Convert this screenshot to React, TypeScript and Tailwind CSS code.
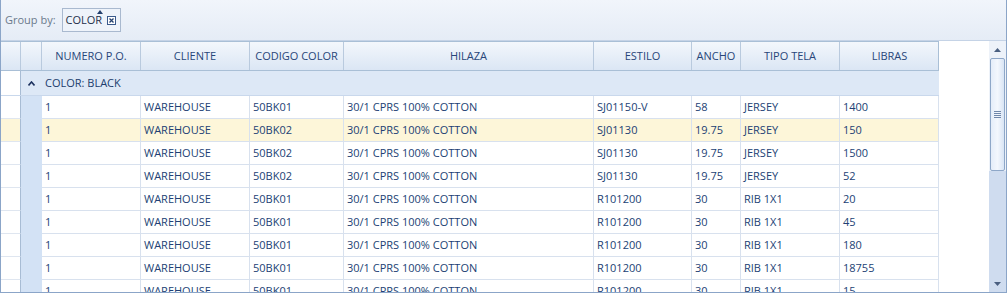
import clsx from 'clsx'

type Row = {
  po: string
  cliente: string
  codigo: string
  hilaza: string
  estilo: string
  ancho: string
  tela: string
  libras: string
}

const columns = [
  { key: 'po', label: 'NUMERO P.O.', width: 'w-[99px]' },
  { key: 'cliente', label: 'CLIENTE', width: 'w-[109px]' },
  { key: 'codigo', label: 'CODIGO COLOR', width: 'w-[94px]' },
  { key: 'hilaza', label: 'HILAZA', width: 'w-[250px]' },
  { key: 'estilo', label: 'ESTILO', width: 'w-[98px]' },
  { key: 'ancho', label: 'ANCHO', width: 'w-[49px]' },
  { key: 'tela', label: 'TIPO TELA', width: 'w-[99px]' },
  { key: 'libras', label: 'LIBRAS', width: 'w-[99px]' },
] as const

const cotton = '30/1 CPRS 100% COTTON'

const rows: Row[] = [
  { po: '1', cliente: 'WAREHOUSE', codigo: '50BK01', hilaza: cotton, estilo: 'SJ01150-V', ancho: '58', tela: 'JERSEY', libras: '1400' },
  { po: '1', cliente: 'WAREHOUSE', codigo: '50BK02', hilaza: cotton, estilo: 'SJ01130', ancho: '19.75', tela: 'JERSEY', libras: '150' },
  { po: '1', cliente: 'WAREHOUSE', codigo: '50BK02', hilaza: cotton, estilo: 'SJ01130', ancho: '19.75', tela: 'JERSEY', libras: '1500' },
  { po: '1', cliente: 'WAREHOUSE', codigo: '50BK02', hilaza: cotton, estilo: 'SJ01130', ancho: '19.75', tela: 'JERSEY', libras: '52' },
  { po: '1', cliente: 'WAREHOUSE', codigo: '50BK01', hilaza: cotton, estilo: 'R101200', ancho: '30', tela: 'RIB 1X1', libras: '20' },
  { po: '1', cliente: 'WAREHOUSE', codigo: '50BK01', hilaza: cotton, estilo: 'R101200', ancho: '30', tela: 'RIB 1X1', libras: '45' },
  { po: '1', cliente: 'WAREHOUSE', codigo: '50BK01', hilaza: cotton, estilo: 'R101200', ancho: '30', tela: 'RIB 1X1', libras: '180' },
  { po: '1', cliente: 'WAREHOUSE', codigo: '50BK01', hilaza: cotton, estilo: 'R101200', ancho: '30', tela: 'RIB 1X1', libras: '18755' },
  { po: '1', cliente: 'WAREHOUSE', codigo: '50BK01', hilaza: cotton, estilo: 'R101200', ancho: '30', tela: 'RIB 1X1', libras: '15' },
]

function GroupPanel() {
  return (
    <div className="flex h-[41px] shrink-0 items-center border-b border-[#c5d3e6] bg-gradient-to-b from-[#f1f5fb] to-[#e5ecf6] pl-[4px]">
      <span className="text-[11px] text-[#6b7a8c]">Group by:</span>
      <div className="relative ml-[6px] flex h-[24px] items-center border border-[#a9b9cf] bg-[#eef3fa] pl-[3px] pr-[4px]">
        <span className="text-[11px] text-[#1e2f4a]">COLOR</span>
        <svg className="absolute left-[34px] top-[1px]" width="6" height="4" viewBox="0 0 6 4">
          <path d="M0 4 L3 0 L6 4 Z" fill="#24406e" />
        </svg>
        <span className="ml-[5px] flex h-[9px] w-[9px] items-center justify-center border border-[#3a5a8c] bg-white">
          <svg width="7" height="7" viewBox="0 0 7 7">
            <path d="M1.5 1.5 L5.5 5.5 M5.5 1.5 L1.5 5.5" stroke="#24406e" strokeWidth="1.3" />
          </svg>
        </span>
      </div>
    </div>
  )
}

function HeaderRow() {
  return (
    <div className="flex h-[30px] w-[938px] shrink-0 border-y border-r border-[#a9bfd6] bg-gradient-to-b from-[#f3f7fc] to-[#dbe6f4]">
      <div className="w-[20px] shrink-0 border-r border-[#b9cade]" />
      <div className="w-[21px] shrink-0 border-r border-[#b9cade]" />
      {columns.map((col, index) => (
        <div
          key={col.key}
          className={clsx(
            col.width,
            'flex shrink-0 items-center justify-center text-[11px] text-[#284679]',
            index < columns.length - 1 && 'border-r border-[#b9cade]',
          )}
        >
          {col.label}
        </div>
      ))}
    </div>
  )
}

function GroupRow() {
  return (
    <div className="flex h-[25px] w-[938px] shrink-0 border-b border-[#c9d8ec] bg-[#dde8f6]">
      <div className="w-[20px] shrink-0 border-r border-[#a8bcd4] bg-white" />
      <div className="flex w-[21px] shrink-0 items-center justify-center">
        <svg width="7" height="5" viewBox="0 0 7 5">
          <path d="M0.5 4.5 L3.5 1 L6.5 4.5" stroke="#1e3360" strokeWidth="1.6" fill="none" />
        </svg>
      </div>
      <div className="flex items-center pl-[3px] text-[11px] text-[#203d6d]">COLOR: BLACK</div>
    </div>
  )
}

function DataRow({ row, selected }: { row: Row; selected: boolean }) {
  return (
    <div className="flex h-[23px] shrink-0">
      <div
        className={clsx(
          'w-[20px] shrink-0 border-b border-r border-b-[#dfe6f0] border-r-[#a8bcd4]',
          selected ? 'bg-[#fdf6d9]' : 'bg-white',
        )}
      />
      <div className="w-[21px] shrink-0 bg-[#d3e2f5]" />
      {columns.map((col) => (
        <div
          key={col.key}
          className={clsx(
            col.width,
            'flex shrink-0 items-center border-b border-r border-[#d8e1ee] pl-[3px] text-[11px] text-[#223f74]',
            selected ? 'bg-[#fdf6d9]' : 'bg-white',
          )}
        >
          {row[col.key]}
        </div>
      ))}
    </div>
  )
}

function ScrollBar() {
  return (
    <div className="flex w-[17px] shrink-0 flex-col bg-[#edf2f9] pt-[1px]">
      <div className="flex h-[16px] items-center justify-center">
        <svg width="7" height="4" viewBox="0 0 7 4">
          <path d="M0 4 L3.5 0 L7 4 Z" fill="#4a5f80" />
        </svg>
      </div>
      <div className="mx-[1px] flex h-[113px] items-center justify-center rounded-[2px] border border-[#8ea7c8] bg-gradient-to-r from-[#e4edf9] via-[#f3f7fd] to-[#d9e5f5]">
        <div className="flex flex-col gap-[1px]">
          <div className="h-px w-[7px] bg-[#6f87aa]" />
          <div className="h-px w-[7px] bg-[#6f87aa]" />
          <div className="h-px w-[7px] bg-[#6f87aa]" />
          <div className="h-px w-[7px] bg-[#6f87aa]" />
        </div>
      </div>
      <div className="flex-1 bg-[#cfdcef]" />
      <div className="flex h-[16px] items-center justify-center bg-[#cfdcef]">
        <svg width="7" height="4" viewBox="0 0 7 4">
          <path d="M0 0 L3.5 4 L7 0 Z" fill="#4a5f80" />
        </svg>
      </div>
    </div>
  )
}

export default function App() {
  return (
    <div
      className="flex h-[293px] w-[1007px] flex-col overflow-hidden border-x border-b border-[#8ba5c8] bg-white"
      style={{ fontFamily: '"Open Sans", "Noto Sans", sans-serif' }}
    >
      <GroupPanel />
      <div className="flex min-h-0 flex-1">
        <div className="flex min-w-0 flex-1 flex-col overflow-hidden">
          <HeaderRow />
          <GroupRow />
          {rows.map((row, index) => (
            <DataRow key={index} row={row} selected={index === 1} />
          ))}
        </div>
        <ScrollBar />
      </div>
    </div>
  )
}
